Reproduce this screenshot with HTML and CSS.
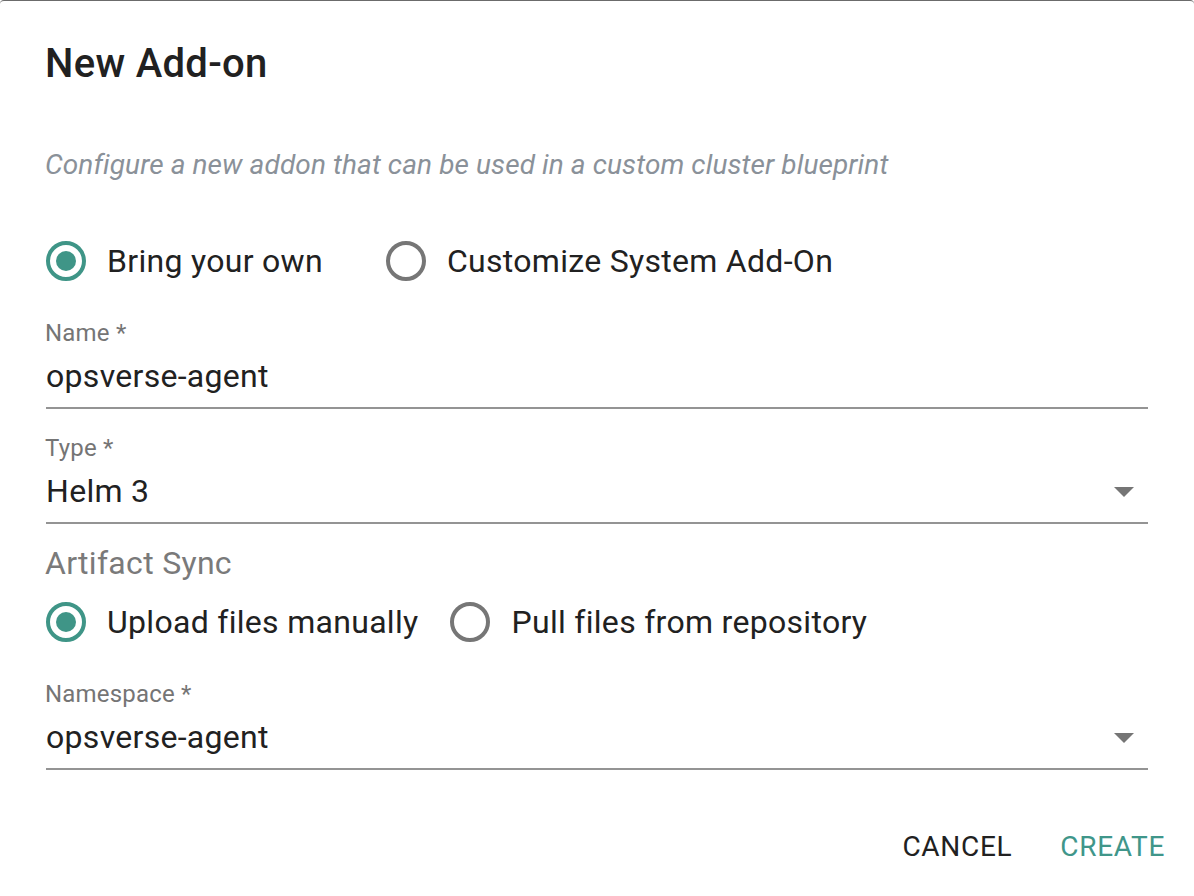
FILE: index.html
```html
<!DOCTYPE html>
<html lang="en">
<head>
<meta charset="utf-8">
<title>New Add-on</title>
<link rel="stylesheet" href="styles.css">
</head>
<body>
<div class="dialog">
  <h2 class="dialog-title">New Add-on</h2>
  <div class="dialog-content">
    <p class="subtitle">Configure a new addon that can be used in a custom cluster blueprint</p>

    <div class="radio-row">
      <label class="radio-option radio-option--wide">
        <svg class="radio-icon checked" viewBox="0 0 24 24" width="48" height="48"><circle cx="12" cy="12" r="9" fill="none" stroke="currentColor" stroke-width="2"/><circle cx="12" cy="12" r="5" fill="currentColor"/></svg>
        <span class="radio-label">Bring your own</span>
      </label>
      <label class="radio-option">
        <svg class="radio-icon" viewBox="0 0 24 24" width="48" height="48"><circle cx="12" cy="12" r="9" fill="none" stroke="currentColor" stroke-width="2"/></svg>
        <span class="radio-label">Customize System Add-On</span>
      </label>
    </div>

    <div class="field">
      <div class="field-label">Name *</div>
      <div class="field-input">opsverse-agent</div>
    </div>

    <div class="field">
      <div class="field-label">Type *</div>
      <div class="field-input field-select">Helm 3
        <svg class="select-arrow" viewBox="0 0 24 24" width="48" height="48"><path d="M7 10l5 5 5-5z" fill="currentColor"/></svg>
      </div>
    </div>

    <div class="group-label">Artifact Sync</div>
    <div class="radio-row">
      <label class="radio-option">
        <svg class="radio-icon checked" viewBox="0 0 24 24" width="48" height="48"><circle cx="12" cy="12" r="9" fill="none" stroke="currentColor" stroke-width="2"/><circle cx="12" cy="12" r="5" fill="currentColor"/></svg>
        <span class="radio-label">Upload files manually</span>
      </label>
      <label class="radio-option">
        <svg class="radio-icon" viewBox="0 0 24 24" width="48" height="48"><circle cx="12" cy="12" r="9" fill="none" stroke="currentColor" stroke-width="2"/></svg>
        <span class="radio-label">Pull files from repository</span>
      </label>
    </div>

    <div class="field field--ns">
      <div class="field-label">Namespace *</div>
      <div class="field-input field-select">opsverse-agent
        <svg class="select-arrow" viewBox="0 0 24 24" width="48" height="48"><path d="M7 10l5 5 5-5z" fill="currentColor"/></svg>
      </div>
    </div>
  </div>
  <div class="dialog-actions">
    <button class="btn btn-cancel">Cancel</button>
    <button class="btn btn-create">Create</button>
  </div>
</div>
</body>
</html>
```

FILE: styles.css
```css
* { box-sizing: border-box; }

html, body {
  margin: 0;
  padding: 0;
  background: #ffffff;
}

body {
  font-family: Roboto, "Liberation Sans", Arial, sans-serif;
  color: #212121;
}

.dialog {
  width: 1194px;
  height: 896px;
  border-top: 1px solid #6b6b6b;
  border-radius: 4px 4px 0 0;
  background: #fff;
}

.dialog-title {
  margin: 0;
  padding: 31px 46px 0 45px;
  font-size: 40px;
  font-weight: 500;
  line-height: 64px;
  letter-spacing: 0.3px;
  color: #212121;
}

.dialog-content {
  padding: 0 46px 0 45px;
}

.subtitle {
  margin: 48px 0 0;
  font-size: 28px;
  line-height: 42px;
  font-style: italic;
  color: #8a9199;
  letter-spacing: 0.1px;
}

.radio-row {
  display: flex;
  align-items: center;
  height: 84px;
  margin-top: 33px;
}

.radio-option {
  display: flex;
  align-items: center;
  margin-right: 31px;
}

.radio-option--wide {
  margin-right: 62px;
}

.radio-icon {
  display: block;
  margin-left: -3px;
  color: #767676;
}

.radio-icon.checked {
  color: #3f9587;
}

.radio-label {
  margin-left: 17px;
  font-size: 32px;
  line-height: 38px;
  letter-spacing: 0.3px;
  color: #212121;
}

.field {
  position: relative;
  margin-top: 16px;
}

.field + .field {
  margin-top: 25px;
}

.field-label {
  font-size: 24px;
  line-height: 28px;
  letter-spacing: 0.2px;
  color: #757575;
}

.field-input {
  position: relative;
  margin-top: 10px;
  margin-left: 1px;
  padding-bottom: 12px;
  font-size: 32px;
  line-height: 38px;
  letter-spacing: 0.3px;
  color: #212121;
  border-bottom: 2px solid #949494;
}

.select-arrow {
  position: absolute;
  right: 0;
  top: -5px;
  color: #757575;
}

.group-label {
  margin-top: 21px;
  font-size: 32px;
  line-height: 36px;
  letter-spacing: 0.3px;
  color: #7a7a7a;
}

.group-label + .radio-row {
  margin-top: -1px;
}

.field--ns {
  margin-top: 16px;
}

.dialog-actions {
  display: flex;
  justify-content: flex-end;
  gap: 16px;
  padding: 40px 13px 0 0;
}

.btn {
  background: none;
  border: none;
  padding: 12px 16px;
  font-family: Roboto, "Liberation Sans", Arial, sans-serif;
  font-size: 28px;
  font-weight: 400;
  line-height: 49px;
  letter-spacing: 0.7px;
  text-transform: uppercase;
  cursor: pointer;
}

.btn-cancel { color: #212121; }
.btn-create { color: #40968a; }
```
